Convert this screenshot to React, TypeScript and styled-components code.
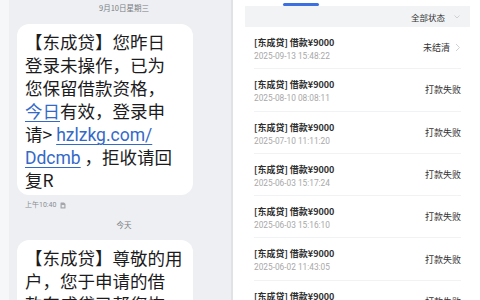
import styled, { createGlobalStyle } from 'styled-components';

const CJK = `"Noto Sans CJK SC", "Noto Sans", sans-serif`;
const MIXED = `Roboto, "Noto Sans CJK SC", sans-serif`;

const GlobalStyle = createGlobalStyle`
  html, body {
    margin: 0;
    padding: 0;
  }
  body {
    width: 480px;
    height: 300px;
    overflow: hidden;
    background: #ffffff;
    font-family: ${CJK};
  }
`;

const loans = [
  { date: '2025-09-13 15:48:22', status: '未结清', open: true },
  { date: '2025-08-10 08:08:11', status: '打款失败', open: false },
  { date: '2025-07-10 11:11:20', status: '打款失败', open: false },
  { date: '2025-06-03 15:17:24', status: '打款失败', open: false },
  { date: '2025-06-03 15:16:10', status: '打款失败', open: false },
  { date: '2025-06-02 11:43:05', status: '打款失败', open: false },
  { date: '2025-06-01 10:20:31', status: '打款失败', open: false },
];

const SimIcon = () => (
  <svg width="6" height="7" viewBox="0 0 6 7">
    <path d="M1 0.5 H4 L5.5 2 V6 Q5.5 6.5 5 6.5 H1 Q0.5 6.5 0.5 6 V1 Q0.5 0.5 1 0.5 Z" fill="#a3a6ab" />
    <rect x="1.7" y="3" width="2.6" height="2.3" fill="#e9ebee" />
  </svg>
);

const ChevronRight = () => (
  <svg width="6" height="9" viewBox="0 0 6 9">
    <polyline points="1,1 4.5,4.5 1,8" fill="none" stroke="#cfd1d5" strokeWidth="1" />
  </svg>
);

const ChevronDown = () => (
  <svg width="6" height="4" viewBox="0 0 6 4">
    <polyline points="0.5,0.5 3,3 5.5,0.5" fill="none" stroke="#cfd1d5" strokeWidth="1" />
  </svg>
);

export default function App() {
  return (
    <>
      <GlobalStyle />
      <Screen>
        <SmsPanel>
          <CenterLabel>9月10日星期三</CenterLabel>
          <Bubble>
            <Line>【东成贷】您昨日</Line>
            <Line>登录未操作，已为</Line>
            <Line>您保留借款资格，</Line>
            <Line>
              <Link>今日</Link>有效，登录申
            </Line>
            <Line>
              请&gt; <Link $latin>hzlzkg.com/</Link>
            </Line>
            <Line>
              <Link $latin>Ddcmb</Link> ，拒收请回
            </Line>
            <Line>复R</Line>
          </Bubble>
          <SentTime>
            上午10:40
            <SimIcon />
          </SentTime>
          <CenterLabel $gap={10}>今天</CenterLabel>
          <Bubble $gap={10}>
            <Line>【东成贷】尊敬的用</Line>
            <Line>户，您于申请的借</Line>
            <Line>款东成贷已帮您恢</Line>
          </Bubble>
        </SmsPanel>

        <LoanPanel>
          <TabStrip>
            <TabIndicator />
          </TabStrip>
          <FilterBar>
            全部状态
            <ChevronDown />
          </FilterBar>
          <LoanList>
            {loans.map((loan) => (
              <LoanRow key={loan.date}>
                <LoanInfo>
                  <LoanTitle>[东成贷] 借款¥9000</LoanTitle>
                  <LoanDate>{loan.date}</LoanDate>
                </LoanInfo>
                <LoanStatus>
                  {loan.status}
                  {loan.open && <ChevronRight />}
                </LoanStatus>
              </LoanRow>
            ))}
          </LoanList>
        </LoanPanel>
      </Screen>
    </>
  );
}

const Screen = styled.div`
  display: flex;
  width: 480px;
  height: 300px;
  overflow: hidden;
`;

const SmsPanel = styled.div`
  flex: none;
  width: 233px;
  height: 300px;
  box-sizing: border-box;
  background: #edeff2;
  border-left: 9px solid #f6f7f9;
  border-right: 2px solid #e0e2e6;
  padding-left: 8px;
  display: flex;
  flex-direction: column;
  overflow: hidden;
`;

const CenterLabel = styled.div<{ $gap?: number }>`
  flex: none;
  margin-top: ${(p) => p.$gap ?? 3}px;
  text-align: center;
  font-size: 7.5px;
  line-height: 10px;
  color: #7a7d82;
`;

const Bubble = styled.div<{ $gap?: number }>`
  flex: none;
  margin-top: ${(p) => p.$gap ?? 11}px;
  width: 176px;
  box-sizing: border-box;
  background: #ffffff;
  border-radius: 12px;
  padding: 6px 6px 4px 8px;
  font-family: ${CJK};
  font-size: 17.5px;
  line-height: 23px;
  color: #1c1c1e;
`;

const Line = styled.div`
  height: 23px;
  white-space: nowrap;
`;

const Link = styled.span<{ $latin?: boolean }>`
  font-family: ${(p) => (p.$latin ? MIXED : CJK)};
  color: #3469c8;
  text-decoration: underline;
  text-decoration-thickness: 1px;
  text-underline-offset: 3px;
`;

const SentTime = styled.div`
  flex: none;
  margin-top: 5px;
  padding-left: 8px;
  display: flex;
  align-items: center;
  gap: 4px;
  font-family: ${MIXED};
  font-size: 7px;
  line-height: 10px;
  color: #8a8d92;
`;

const LoanPanel = styled.div`
  flex: 1;
  height: 300px;
  background: #ffffff;
  display: flex;
  flex-direction: column;
  overflow: hidden;
`;

const TabStrip = styled.div`
  flex: none;
  height: 6px;
  display: flex;
  align-items: flex-end;
`;

const TabIndicator = styled.div`
  margin-left: 50px;
  width: 36px;
  height: 3px;
  border-radius: 1.5px;
  background: #3c6fe0;
`;

const FilterBar = styled.div`
  flex: none;
  margin: 0 10px 0 12px;
  height: 21px;
  background: #f2f3f5;
  display: flex;
  justify-content: flex-end;
  align-items: center;
  gap: 9px;
  padding-right: 10px;
  font-size: 8.5px;
  color: #333333;
`;

const LoanList = styled.div`
  flex: none;
  margin: 0 19px 0 21px;
  display: flex;
  flex-direction: column;
`;

const LoanRow = styled.div`
  flex: none;
  height: 42.3px;
  box-sizing: border-box;
  border-bottom: 1px solid #f1f2f4;
  display: flex;
  align-items: center;
  justify-content: space-between;
`;

const LoanInfo = styled.div`
  align-self: flex-start;
  padding-top: 10px;
  display: flex;
  flex-direction: column;
  gap: 1px;
`;

const LoanTitle = styled.div`
  font-size: 9px;
  line-height: 12px;
  font-weight: 700;
  color: #2f2f2f;
`;

const LoanDate = styled.div`
  font-family: ${MIXED};
  font-size: 8.3px;
  line-height: 12px;
  color: #a8a8a8;
`;

const LoanStatus = styled.div`
  display: flex;
  align-items: center;
  gap: 5px;
  font-size: 9px;
  color: #333333;
`;
